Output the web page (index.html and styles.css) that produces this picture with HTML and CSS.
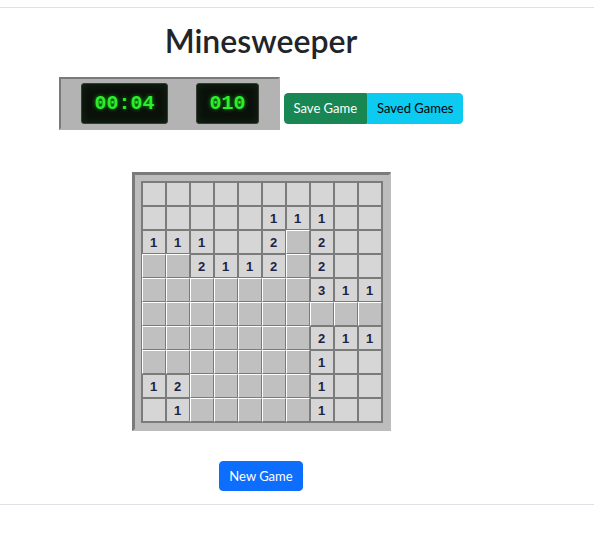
FILE: index.html
```html
<!DOCTYPE html>
<html lang="en">
<head>
<meta charset="utf-8">
<title>Minesweeper</title>
<link rel="stylesheet" href="styles.css">
</head>
<body>
<div class="page">
  <main class="game">
    <h1 class="title">Minesweeper</h1>
    <div class="toolbar">
      <div class="panel">
        <div class="lcd">00:04</div>
        <div class="lcd">010</div>
      </div>
      <div class="btn-group">
        <button class="btn btn-success">Save Game</button>
        <button class="btn btn-info">Saved Games</button>
      </div>
    </div>
    <div class="board">
      <div class="grid" id="grid"></div>
    </div>
    <button class="btn btn-primary new-game">New Game</button>
  </main>
</div>
<script src="app.js"></script>
</body>
</html>
```
FILE: app.js
```js
// '.' = revealed empty, '#' = hidden, digit = revealed number
var rows = [
  "..........",
  ".....111..",
  "111..2#2..",
  "##2112#2..",
  "#######311",
  "##########",
  "#######211",
  "#######1..",
  "12#####1..",
  ".1#####1.."
];
var grid = document.getElementById('grid');
rows.forEach(function (r) {
  for (var i = 0; i < r.length; i++) {
    var c = document.createElement('div');
    var ch = r[i];
    if (ch === '#') {
      c.className = 'cell hidden';
    } else {
      c.className = 'cell open';
      if (ch !== '.') c.textContent = ch;
    }
    grid.appendChild(c);
  }
});
```
FILE: styles.css
```css
* { box-sizing: border-box; }
body {
  margin: 0;
  font-family: Lato, "Liberation Sans", sans-serif;
  color: #212529;
  background: #fff;
}
.page {
  margin-top: 7px;
  border-top: 1px solid #dee2e6;
  border-bottom: 1px solid #dee2e6;
}
.game {
  width: 522px;
  display: flex;
  flex-direction: column;
  align-items: center;
  padding-bottom: 13px;
}
.title {
  margin: 14px 0 0;
  font-size: 32px;
  font-weight: 600;
  line-height: 38px;
  color: #212529;
}
.toolbar {
  display: flex;
  align-items: flex-end;
  margin-top: 17px;
}
.panel {
  display: flex;
  gap: 28px;
  padding: 4px 19px 4px 20px;
  background: #b3b3b3;
  border: 2px solid #b3b3b3;
  border-top-color: #7a7a7a;
  border-left-color: #7a7a7a;
}
.lcd {
  height: 41px;
  line-height: 39px;
  padding: 0 12px 0 13px;
  background: #0b100b;
  border: 1px solid #3a3a3a;
  border-radius: 3px;
  box-shadow: inset 0 0 8px rgba(40, 120, 40, 0.25);
  font-family: "Liberation Mono", "Courier New", monospace;
  font-weight: 700;
  font-size: 20px;
  color: #2bef2b;
  text-shadow: 0 0 4px rgba(30, 255, 30, 0.6);
}
.btn-group {
  display: flex;
  margin-left: 4px;
  margin-bottom: 6px;
}
.btn {
  font-family: Lato, "Liberation Sans", sans-serif;
  font-size: 13px;
  line-height: 21px;
  padding: 4px 9px;
  border: 1px solid transparent;
  border-radius: 4px;
  cursor: pointer;
}
.btn-group .btn:first-child { border-top-right-radius: 0; border-bottom-right-radius: 0; }
.btn-group .btn:last-child { border-top-left-radius: 0; border-bottom-left-radius: 0; }
.btn-success { background: #198754; border-color: #198754; color: #fff; }
.btn-info { background: #0dcaf0; border-color: #0dcaf0; color: #000; }
.btn-primary { background: #0d6efd; border-color: #0d6efd; color: #fff; }
.board {
  margin-top: 42px;
  padding: 6px;
  background: #bdbdbd;
  border: 3px solid #bdbdbd;
  border-top-color: #7b7b7b;
  border-left-color: #7b7b7b;
  border-right-width: 2px;
  border-bottom-width: 2px;
}
.grid {
  display: grid;
  grid-template-columns: repeat(10, 24px);
  grid-auto-rows: 24px;
  border: 1px solid #7b7b7b;
}
.cell {
  border: 1px solid #7b7b7b;
  display: flex;
  align-items: center;
  justify-content: center;
  font-family: "Liberation Sans", Arial, sans-serif;
  font-weight: 700;
  font-size: 13px;
  color: #1e2247;
}
.cell.open { background: #d6d6d6; }
.cell.hidden {
  background: #c0c0c0;
  border-top-color: #fff;
  border-left-color: #fff;
}
.new-game {
  margin-top: 30px;
  height: 30px;
  padding: 3px 9px;
}
```
